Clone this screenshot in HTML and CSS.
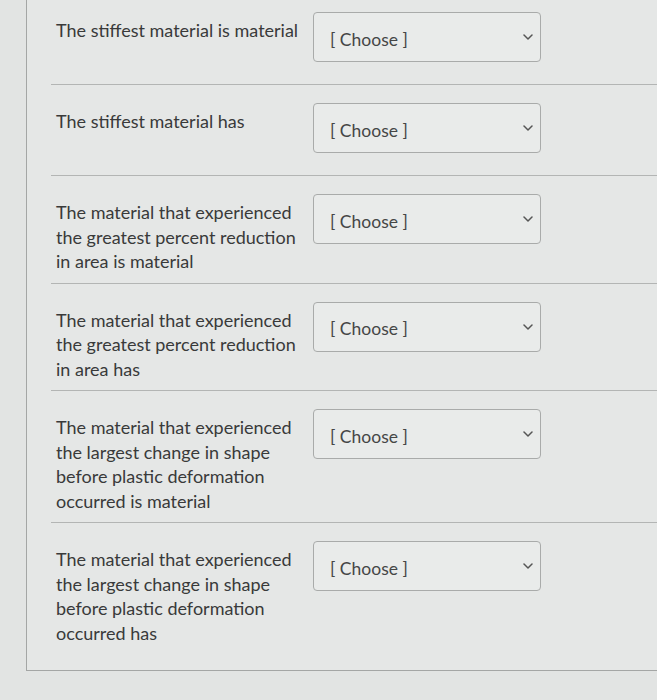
FILE: index.html
```html
<!DOCTYPE html>
<html>
<head>
<meta charset="utf-8">
<link rel="stylesheet" href="styles.css">
</head>
<body>
<div class="card">
  <div class="row first">
    <div class="label">The stiffest material is material</div>
    <div class="select"><span>[ Choose ]</span><svg class="chev" width="10" height="6" viewBox="0 0 10 6"><path d="M1 1 L5 5 L9 1" fill="none" stroke="#555" stroke-width="1.5" stroke-linecap="round" stroke-linejoin="round"/></svg></div>
  </div>
  <div class="row">
    <div class="label">The stiffest material has</div>
    <div class="select"><span>[ Choose ]</span><svg class="chev" width="10" height="6" viewBox="0 0 10 6"><path d="M1 1 L5 5 L9 1" fill="none" stroke="#555" stroke-width="1.5" stroke-linecap="round" stroke-linejoin="round"/></svg></div>
  </div>
  <div class="row">
    <div class="label">The material that experienced the greatest percent reduction in area is material</div>
    <div class="select"><span>[ Choose ]</span><svg class="chev" width="10" height="6" viewBox="0 0 10 6"><path d="M1 1 L5 5 L9 1" fill="none" stroke="#555" stroke-width="1.5" stroke-linecap="round" stroke-linejoin="round"/></svg></div>
  </div>
  <div class="row">
    <div class="label">The material that experienced the greatest percent reduction in area has</div>
    <div class="select"><span>[ Choose ]</span><svg class="chev" width="10" height="6" viewBox="0 0 10 6"><path d="M1 1 L5 5 L9 1" fill="none" stroke="#555" stroke-width="1.5" stroke-linecap="round" stroke-linejoin="round"/></svg></div>
  </div>
  <div class="row">
    <div class="label">The material that experienced the largest change in shape before plastic deformation occurred is material</div>
    <div class="select"><span>[ Choose ]</span><svg class="chev" width="10" height="6" viewBox="0 0 10 6"><path d="M1 1 L5 5 L9 1" fill="none" stroke="#555" stroke-width="1.5" stroke-linecap="round" stroke-linejoin="round"/></svg></div>
  </div>
  <div class="row last">
    <div class="label">The material that experienced the largest change in shape before plastic deformation occurred has</div>
    <div class="select"><span>[ Choose ]</span><svg class="chev" width="10" height="6" viewBox="0 0 10 6"><path d="M1 1 L5 5 L9 1" fill="none" stroke="#555" stroke-width="1.5" stroke-linecap="round" stroke-linejoin="round"/></svg></div>
  </div>
</div>
</body>
</html>
```
FILE: styles.css
```css
html, body {
  margin: 0;
  padding: 0;
  background: #e2e4e3;
  font-family: Lato, "Open Sans", sans-serif;
  color: #393a3a;
}

.card {
  margin-left: 26px;
  height: 671px;
  border-left: 1px solid #a4a6a5;
  border-bottom: 1px solid #a4a6a5;
  box-sizing: border-box;
  background: #e5e7e6;
}

.row {
  display: flex;
  align-items: flex-start;
  gap: 9px;
  margin-left: 24px;
  padding: 18px 0 9px 5px;
  border-bottom: 1px solid #b3b5b4;
}

.row.first {
  padding-top: 12px;
}

.row.last {
  border-bottom: none;
}

.label {
  width: 248px;
  flex: none;
  margin-top: 6px;
  font-size: 18px;
  line-height: 24.5px;
}

.select {
  width: 228px;
  height: 50px;
  margin-bottom: 13px;
  flex: none;
  box-sizing: border-box;
  border: 1px solid #a9abaa;
  border-radius: 4px;
  background: #e9ebea;
  display: flex;
  align-items: center;
  justify-content: space-between;
  padding: 4px 7px 0 16px;
  font-size: 17.5px;
  color: #454646;
}

.chev {
  margin-top: -4px;
}
```
